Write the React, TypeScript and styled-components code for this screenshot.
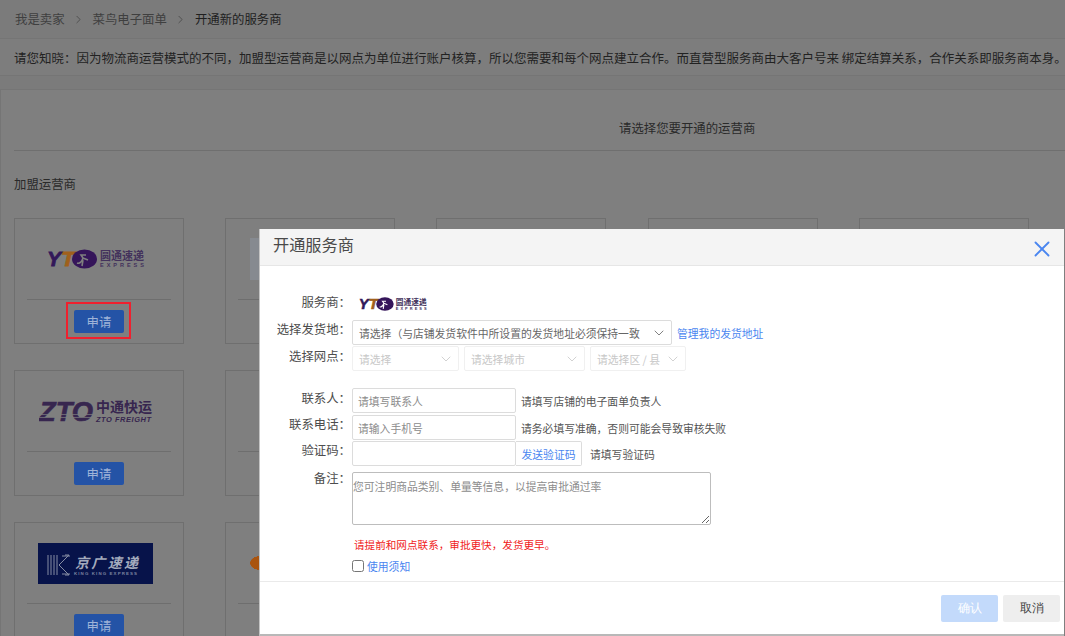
import React from 'react'
import styled, { createGlobalStyle } from 'styled-components'
import { ChevronDown, ChevronRight, X } from 'lucide-react'

const Global = createGlobalStyle`
  html, body {
    margin: 0;
    padding: 0;
    height: 100%;
    overflow: hidden;
    background: #7b7b7b;
  }
  * {
    box-sizing: border-box;
  }
  body, input, textarea {
    font-family: "Noto Sans CJK SC", "Liberation Sans", sans-serif;
  }
`

const Page = styled.div`
  position: relative;
  width: 1065px;
  height: 636px;
  overflow: hidden;
  font-size: 12.4px;
  color: #262626;
`

const Breadcrumb = styled.div`
  display: flex;
  align-items: center;
  gap: 7.5px;
  height: 38px;
  padding-left: 15px;
  color: #3f3f3f;
  svg {
    color: #444;
  }
  strong {
    font-weight: 400;
    color: #1f1f1f;
  }
`

const Notice = styled.div`
  display: flex;
  align-items: center;
  height: 38px;
  padding-left: 14px;
  margin-bottom: 13px;
  font-size: 12.5px;
  white-space: nowrap;
  background: #7d7d7d;
  border-top: 1px solid #757575;
  border-bottom: 1px solid #757575;
  color: #222;
`

const Panel = styled.div`
  height: 600px;
  background: #7f7f7f;
  border-top: 1px solid #757575;
  border-left: 1px solid #757575;
`

const PanelTitle = styled.div`
  display: flex;
  align-items: center;
  height: 61px;
  margin-left: 13px;
  padding: 16px 0 0 605px;
  border-bottom: 1px solid #6f6f6f;
  color: #2a2a2a;
`

const SectionLabel = styled.div`
  height: 67px;
  padding: 24px 0 0 13px;
  color: #2a2a2a;
`

const CardGrid = styled.div`
  display: grid;
  grid-template-columns: repeat(5, 170px);
  grid-auto-rows: 126px;
  column-gap: 41.2px;
  row-gap: 26px;
  padding-left: 13px;
`

const Card = styled.div`
  display: flex;
  flex-direction: column;
  border: 1px solid #6f6f6f;
`

const CardLogo = styled.div`
  display: flex;
  align-items: center;
  justify-content: center;
  height: 81px;
  margin: 0 12px;
  padding-right: 7px;
  border-bottom: 1px solid #6e6e6e;
`

const CardAction = styled.div`
  display: flex;
  justify-content: center;
  padding-top: 10px;
`

const ApplyButton = styled.button<{ $marked?: boolean }>`
  position: relative;
  width: 50px;
  height: 23px;
  padding: 0;
  border: none;
  border-radius: 2px;
  background: #2453a6;
  color: #9fb4d8;
  font: inherit;
  &::after {
    content: ${p => (p.$marked ? '""' : 'none')};
    position: absolute;
    inset: -8px -7px -6px -8px;
    border: 2px solid #f0202e;
  }
`

const PaleLogo = styled.div`
  width: 113px;
  height: 42px;
  background: #868a90;
`

const OrangeLogo = styled.div`
  width: 113px;
  height: 16px;
  background: radial-gradient(ellipse 10px 7px at 10px 50%, #a9540f 96%, transparent 100%);
`

const Modal = styled.div`
  position: absolute;
  left: 259px;
  top: 229px;
  width: 805px;
  height: 407px;
  display: flex;
  flex-direction: column;
  background: #fff;
  border-left: 1px solid #c4c4c4;
  border-bottom: 2px solid #b8b8b8;
  color: #555;
`

const ModalHeader = styled.div`
  display: flex;
  align-items: center;
  justify-content: space-between;
  flex: none;
  height: 37px;
  padding: 0 9px 7px 13px;
  background: #f4f4f4;
  border-bottom: 1px solid #e6e6e6;
  font-size: 16.2px;
  color: #4a4a4a;
`

const CloseIcon = styled(X)`
  color: #4a86f0;
  margin-top: 10px;
`

const ModalBody = styled.div`
  flex: 1;
  display: flex;
  flex-direction: column;
  padding-top: 28px;
`

const Row = styled.div<{ $h: number; $mt?: number; $top?: boolean }>`
  display: flex;
  align-items: ${p => (p.$top ? 'flex-start' : 'center')};
  height: ${p => p.$h}px;
  margin-top: ${p => p.$mt ?? 0}px;
`

const Label = styled.div<{ $up?: number }>`
  flex: none;
  width: 91px;
  margin-right: 1px;
  text-align: right;
  white-space: nowrap;
  color: #4d4d4d;
  transform: translateY(${p => -(p.$up ?? 0)}px);
`

const SelectBox = styled.div<{ $w: number; $off?: boolean }>`
  display: flex;
  align-items: center;
  justify-content: space-between;
  flex: none;
  width: ${p => p.$w}px;
  height: 25px;
  padding: 0 4px 0 6px;
  margin-right: 5px;
  border: 1px solid ${p => (p.$off ? '#f0f0f0' : '#dcdcdc')};
  border-radius: 2px;
  color: ${p => (p.$off ? '#c8c8c8' : '#666')};
  font-size: 10.8px;
  white-space: nowrap;
  svg {
    flex: none;
    color: ${p => (p.$off ? '#cfcfcf' : '#777')};
  }
`

const Field = styled.input<{ $w: number }>`
  flex: none;
  width: ${p => p.$w}px;
  height: 25px;
  padding: 0 5px;
  border: 1px solid #dcdcdc;
  border-radius: 2px;
  outline: none;
  font-size: 10.8px;
  color: #555;
  &::placeholder {
    color: #8c8c8c;
  }
`

const Remark = styled.textarea`
  width: 359px;
  height: 53px;
  padding: 5px 0 0 0;
  border: 1px solid #bdbdbd;
  border-radius: 2px;
  outline: none;
  font-size: 10.8px;
  line-height: 16px;
  &::placeholder {
    color: #8c8c8c;
  }
`

const Hint = styled.span<{ $ml?: number }>`
  margin-left: ${p => p.$ml ?? 5}px;
  font-size: 10.8px;
  color: #555;
  white-space: nowrap;
`

const LinkText = styled.a`
  font-size: 10.8px;
  color: #4a86f0;
  white-space: nowrap;
`

const SendCode = styled.div`
  display: flex;
  align-items: center;
  justify-content: center;
  flex: none;
  width: 66px;
  height: 25px;
  border: 1px solid #dcdcdc;
  border-left: none;
  border-radius: 0 2px 2px 0;
`

const Warning = styled.div`
  margin: 11px 0 0 94px;
  height: 18px;
  font-size: 10.6px;
  line-height: 18px;
  color: #f01c1c;
`

const Agree = styled.label`
  display: flex;
  align-items: center;
  gap: 3px;
  height: 18px;
  margin: 3px 0 0 92px;
  input {
    width: 12px;
    height: 12px;
    margin: 0;
  }
`

const ModalFooter = styled.div`
  display: flex;
  align-items: center;
  justify-content: flex-end;
  gap: 5px;
  flex: none;
  height: 53px;
  padding: 0 4px 0 0;
  border-top: 1px solid #eaeaea;
`

const FooterButton = styled.button<{ $primary?: boolean }>`
  width: 57px;
  height: 27px;
  padding: 0;
  border: none;
  border-radius: 2px;
  font-size: 12.4px;
  background: ${p => (p.$primary ? '#c3dafb' : '#eeeeee')};
  color: ${p => (p.$primary ? '#fff' : '#444')};
`

const ModalLogo = styled.div`
  display: flex;
  margin-left: 6px;
`

const YtoLogo = ({ width, back = '#7f7f7f' }: { width: number; back?: string }) => (
  <svg width={width} height={width / 5} viewBox="0 0 100 20">
    <text x="1" y="17" fontSize="21" fontWeight="900" fontStyle="italic" fontFamily="Liberation Sans" fill="#33185a" stroke="#33185a" strokeWidth="0.8" textLength="14" lengthAdjust="spacingAndGlyphs">Y</text>
    <text x="15" y="17" fontSize="21" fontWeight="900" fontStyle="italic" fontFamily="Liberation Sans" fill="#a0601c" stroke="#a0601c" strokeWidth="0.8" textLength="14" lengthAdjust="spacingAndGlyphs">T</text>
    <ellipse cx="38.5" cy="10" rx="12.5" ry="9.5" fill="#35155a" />
    <path d="M31 14c3 1 5-2 6-5l5 2m-5-2-2-3h5m-3 5-1 6" stroke={back} strokeWidth="1.6" fill="none" />
    <text x="54" y="11" fontSize="11" fontFamily="Noto Sans CJK SC" fontWeight="700" fill="#43325c" textLength="44">圆通速递</text>
    <text x="54" y="18" fontSize="5.6" fontFamily="Liberation Sans" fontWeight="700" fill="#43325c" textLength="44">EXPRESS</text>
  </svg>
)

const ZtoLogo = () => (
  <svg width="114" height="24" viewBox="0 0 114 24">
    <text x="0" y="22" fontSize="28" fontWeight="900" fontStyle="italic" fontFamily="Liberation Sans" textLength="54" lengthAdjust="spacingAndGlyphs" fill="#37264f" stroke="#37264f" strokeWidth="0.7">ZTO</text>
    <path d="M0 15.5h56M0 18.5h56" stroke="#7f7f7f" strokeWidth="0.7" />
    <text x="57" y="13" fontSize="14" fontWeight="700" fontFamily="Noto Sans CJK SC" fill="#37264f" textLength="56">中通快运</text>
    <text x="57" y="23" fontSize="7.5" fontStyle="italic" fontWeight="700" fontFamily="Liberation Sans" fill="#37264f" textLength="55">ZTO FREIGHT</text>
  </svg>
)

const JgLogo = () => (
  <svg width="115" height="41" viewBox="0 0 115 41">
    <rect width="115" height="41" fill="#07134a" />
    <path d="M10 12v20M13 12v20M16 12v20M19 12v20M21 22 31 12h-4M21 22 31 32h-4M24 13h8M24 31h8" stroke="#868da3" strokeWidth="1" fill="none" />
    <text x="37" y="25" fontSize="14" fontWeight="700" fontStyle="italic" fontFamily="Noto Sans CJK SC" fill="#a4abbd" textLength="63">京广速递</text>
    <text x="36" y="32" fontSize="4.4" fontWeight="700" fontFamily="Liberation Sans" fill="#7c84a0" textLength="63">KING KING EXPRESS</text>
  </svg>
)

const logos: React.ReactNode[] = [
  <YtoLogo width={100} key="yto" />,
  <PaleLogo key="pale" />,
  null,
  null,
  null,
  <ZtoLogo key="zto" />,
  null,
  null,
  null,
  null,
  <JgLogo key="jg" />,
  <OrangeLogo key="orange" />,
  null,
  null,
  null,
]

export default function App() {
  return (
    <Page>
      <Global />
      <Breadcrumb>
        <span>我是卖家</span>
        <ChevronRight size={13} strokeWidth={1.4} />
        <span>菜鸟电子面单</span>
        <ChevronRight size={13} strokeWidth={1.4} />
        <strong>开通新的服务商</strong>
      </Breadcrumb>
      <Notice>请您知晓：因为物流商运营模式的不同，加盟型运营商是以网点为单位进行账户核算，所以您需要和每个网点建立合作。而直营型服务商由大客户号来 绑定结算关系，合作关系即服务商本身。</Notice>
      <Panel>
        <PanelTitle>请选择您要开通的运营商</PanelTitle>
        <SectionLabel>加盟运营商</SectionLabel>
        <CardGrid>
          {logos.map((logo, i) => (
            <Card key={i}>
              <CardLogo>{logo}</CardLogo>
              {/* only the first column's buttons show, the dialog covers the rest */}
              {i % 5 === 0 && (
                <CardAction>
                  <ApplyButton $marked={i === 0}>申请</ApplyButton>
                </CardAction>
              )}
            </Card>
          ))}
        </CardGrid>
      </Panel>

      <Modal>
        <ModalHeader>
          <span>开通服务商</span>
          <CloseIcon size={26} strokeWidth={1.7} />
        </ModalHeader>
        <ModalBody>
          <Row $h={20}>
            <Label $up={2}>服务商：</Label>
            <ModalLogo>
              <YtoLogo width={70} back="#ffffff" />
            </ModalLogo>
          </Row>
          <Row $h={25} $mt={6}>
            <Label $up={4}>选择发货地：</Label>
            <SelectBox $w={320}>
              <span>请选择（与店铺发货软件中所设置的发货地址必须保持一致</span>
              <ChevronDown size={16} strokeWidth={1.4} />
            </SelectBox>
            <LinkText>管理我的发货地址</LinkText>
          </Row>
          <Row $h={25} $mt={1}>
            <Label $up={3}>选择网点：</Label>
            <SelectBox $w={107} $off>
              <span>请选择</span>
              <ChevronDown size={16} strokeWidth={1.4} />
            </SelectBox>
            <SelectBox $w={121} $off>
              <span>请选择城市</span>
              <ChevronDown size={16} strokeWidth={1.4} />
            </SelectBox>
            <SelectBox $w={96} $off>
              <span>请选择区 / 县</span>
              <ChevronDown size={16} strokeWidth={1.4} />
            </SelectBox>
          </Row>
          <Row $h={25} $mt={17}>
            <Label $up={3}>联系人：</Label>
            <Field $w={164} placeholder="请填写联系人" />
            <Hint>请填写店铺的电子面单负责人</Hint>
          </Row>
          <Row $h={25} $mt={2}>
            <Label $up={4}>联系电话：</Label>
            <Field $w={164} placeholder="请输入手机号" />
            <Hint>请务必填写准确，否则可能会导致审核失败</Hint>
          </Row>
          <Row $h={25} $mt={1}>
            <Label $up={4}>验证码：</Label>
            <Field $w={164} />
            <SendCode>
              <LinkText>发送验证码</LinkText>
            </SendCode>
            <Hint $ml={8}>请填写验证码</Hint>
          </Row>
          <Row $h={53} $mt={6} $top>
            <Label $up={3}>备注：</Label>
            <Remark placeholder="您可注明商品类别、单量等信息，以提高审批通过率" />
          </Row>
          <Warning>请提前和网点联系，审批更快，发货更早。</Warning>
          <Agree>
            <input type="checkbox" />
            <LinkText>使用须知</LinkText>
          </Agree>
        </ModalBody>
        <ModalFooter>
          <FooterButton $primary>确认</FooterButton>
          <FooterButton>取消</FooterButton>
        </ModalFooter>
      </Modal>
    </Page>
  )
}
